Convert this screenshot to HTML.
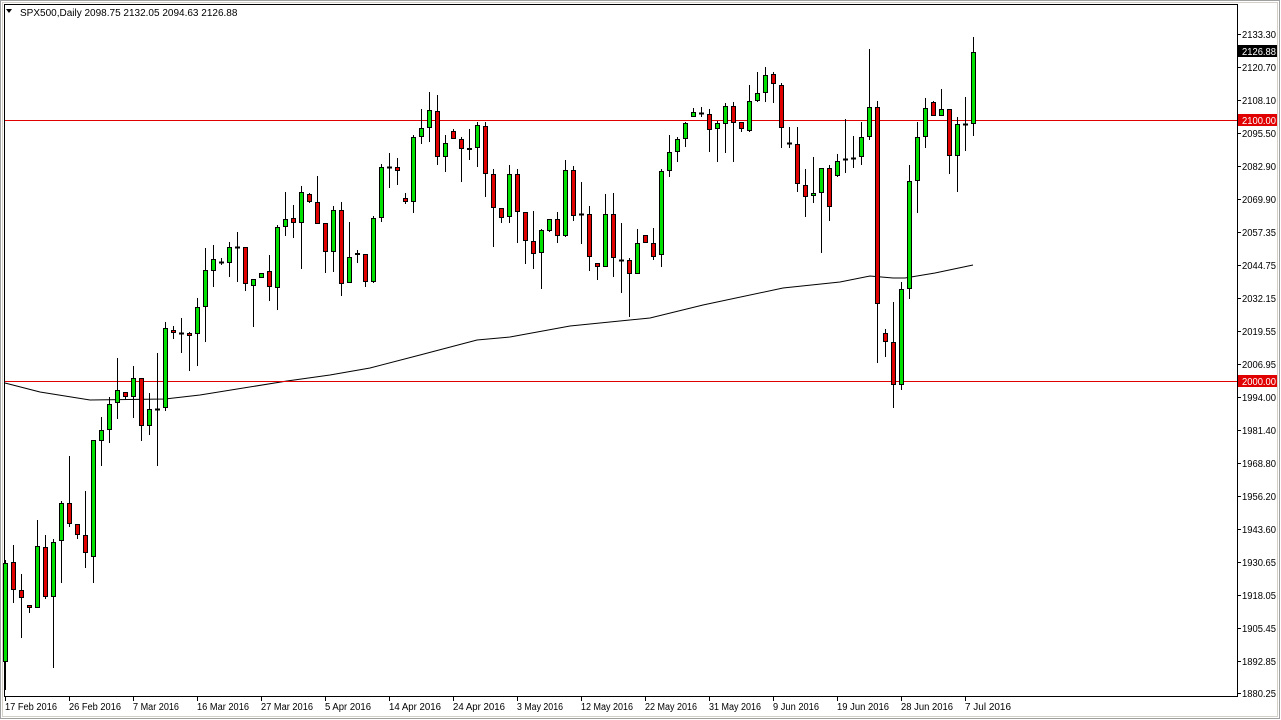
<!DOCTYPE html>
<html><head><meta charset="utf-8"><style>
html,body{margin:0;padding:0;background:#fff;width:1281px;height:720px;overflow:hidden}
svg{display:block}
text{font-family:"Liberation Sans","DejaVu Sans",sans-serif;font-size:10px;fill:#000}
</style></head><body>
<svg id="s" width="1281" height="720" xmlns="http://www.w3.org/2000/svg">
<rect x="0" y="0" width="1281" height="720" fill="#fff"/>
<rect x="0.5" y="0.5" width="1279" height="718" fill="none" stroke="#a0a0a0"/>
<rect x="2.5" y="2.5" width="1275" height="714" fill="none" stroke="#d4d0c8"/>
<line x1="4.5" y1="4" x2="4.5" y2="697" stroke="#000"/>
<line x1="4" y1="4.5" x2="1237" y2="4.5" stroke="#000"/>
<line x1="1237.5" y1="4" x2="1237.5" y2="697" stroke="#000"/>
<line x1="4" y1="696.5" x2="1237" y2="696.5" stroke="#000"/>
<path d="M6 9 L12 9 L9 13 Z" fill="#000"/>
<text x="20" y="16">SPX500,Daily  2098.75 2132.05 2094.63 2126.88</text>
<g id="g"></g>
</svg>
<script>
var S='http://www.w3.org/2000/svg',g=document.getElementById('g');
function el(n,a,t){var e=document.createElementNS(S,n);for(var k in a)e.setAttribute(k,a[k]);if(t)e.textContent=t;g.appendChild(e);return e;}
var ma=[[5,383],[40,392],[90,400],[165,399],[200,395],[287,381],[330,375],[370,368],[420,355],[477,340],[510,337],[570,326],[650,318],[703,305],[783,288],[840,282],[870,276],[893,278],[905,278],[935,273],[973,265]];
el('polyline',{points:ma.map(function(p){return p.join(',')}).join(' '),fill:'none',stroke:'#000','stroke-width':1});
el('rect',{x:5,y:120,width:1232,height:1,fill:'#e00000'});
el('rect',{x:5,y:381,width:1232,height:1,fill:'#e00000'});
var d=[[560,690,662,563],[545,603,562,590],[574,638,590,598],[605,613,605,608],[520,608,608,546],[535,599,547,597],[539,668,597,542],[501,583,541,503],[456,527,503,524],[524,539,524,535],[491,568,535,553],[440,583,557,440],[417,466,441,430],[397,443,430,404],[358,419,403,390],[392,400,392,397],[366,418,397,378],[378,441,378,426],[393,435,426,409],[353,466,409,409],[322,411,408,328],[326,339,330,333],[318,353,333,333],[332,371,333,336],[298,366,334,307],[248,342,307,270],[245,287,271,259],[258,265,262,262],[242,277,263,247],[232,282,247,247],[247,291,247,284],[279,327,286,279],[273,278,278,273],[255,301,271,287],[225,310,288,227],[192,236,227,219],[205,238,218,223],[186,269,223,192],[193,203,194,202],[176,224,202,224],[223,273,223,252],[206,272,252,210],[202,296,210,284],[222,283,283,257],[250,263,255,253],[254,287,254,282],[216,283,282,218],[164,222,218,167],[153,188,167,167],[158,185,167,171],[193,204,198,202],[135,213,202,137],[109,144,137,128],[92,142,128,110],[95,165,111,157],[135,172,157,143],[129,139,131,139],[137,182,139,149],[129,160,150,148],[122,167,148,125],[122,197,126,174],[169,247,174,208],[208,223,208,218],[165,223,217,174],[169,243,174,212],[212,264,212,241],[211,269,241,254],[229,289,253,230],[219,232,231,219],[212,243,219,236],[160,237,236,170],[166,221,170,216],[182,244,214,214],[206,271,214,257],[263,280,263,267],[194,267,267,214],[193,277,214,258],[223,293,260,260],[258,317,260,274],[229,274,274,243],[235,243,235,243],[228,260,243,257],[169,267,255,171],[135,177,171,152],[137,162,152,139],[122,147,139,123],[108,117,117,112],[107,117,113,113],[109,152,114,130],[121,162,129,123],[103,153,124,106],[102,162,106,123],[122,132,122,129],[85,132,131,101],[72,102,101,93],[67,102,93,75],[72,103,74,84],[83,148,85,128],[127,148,143,143],[127,192,144,184],[169,217,185,197],[157,203,196,193],[168,253,193,168],[165,221,168,207],[154,177,176,161],[119,173,159,159],[136,168,158,158],[122,165,157,137],[49,140,137,107],[101,363,107,304],[329,357,333,342],[302,408,342,385],[282,390,385,289],[165,299,289,181],[122,213,181,137],[98,148,137,108],[101,116,102,116],[89,116,116,109],[109,174,109,156],[117,192,156,124],[97,151,124,124],[37,136,124,52]];
for(var i=0;i<d.length;i++){var x=5+8*i,c=d[i],h=c[0],l=c[1],o=c[2],cl=c[3];
 el('line',{x1:x+.5,y1:h,x2:x+.5,y2:l,stroke:'#000'});
 var t=Math.min(o,cl),b=Math.max(o,cl);
 if(b-t<2){el('line',{x1:x-2,y1:t+.5,x2:x+3,y2:t+.5,stroke:'#000','stroke-width':2});}
 else el('rect',{x:x-1.5,y:t+.5,width:4,height:b-t-1,fill:cl<o?'#00e000':'#e00000',stroke:'#000'});
}
var pl=[['2133.30',34],['2120.70',67],['2108.10',100],['2095.50',133],['2082.90',166],['2069.90',199],['2057.35',232],['2044.75',265],['2032.15',298],['2019.55',331],['2006.95',364],['1994.00',397],['1981.40',430],['1968.80',463],['1956.20',496],['1943.60',529],['1930.65',562],['1918.05',595],['1905.45',628],['1892.85',661],['1880.25',693]];
pl.forEach(function(p){el('line',{x1:1237,y1:p[1]+.5,x2:1241,y2:p[1]+.5,stroke:'#000'});el('text',{x:1242,y:p[1]+4,textLength:34,lengthAdjust:'spacingAndGlyphs'},p[0]);});
[['2126.88',51,'#000'],['2100.00',120,'#e00000'],['2000.00',381,'#e00000']].forEach(function(p){el('rect',{x:1238,y:p[1]-6,width:39,height:12,fill:p[2]});el('text',{x:1242,y:p[1]+4,textLength:34,lengthAdjust:'spacingAndGlyphs',style:'fill:#fff'},p[0]);});
var dl=['17 Feb 2016','26 Feb 2016','7 Mar 2016','16 Mar 2016','27 Mar 2016','5 Apr 2016','14 Apr 2016','24 Apr 2016','3 May 2016','12 May 2016','22 May 2016','31 May 2016','9 Jun 2016','19 Jun 2016','28 Jun 2016','7 Jul 2016'];
dl.forEach(function(s,i){var x=5+64*i;el('line',{x1:x+.5,y1:697,x2:x+.5,y2:701,stroke:'#000'});el('text',{x:x,y:710,textLength:(s.length==11?52:46),lengthAdjust:'spacingAndGlyphs'},s);});
</script>
</body></html>
